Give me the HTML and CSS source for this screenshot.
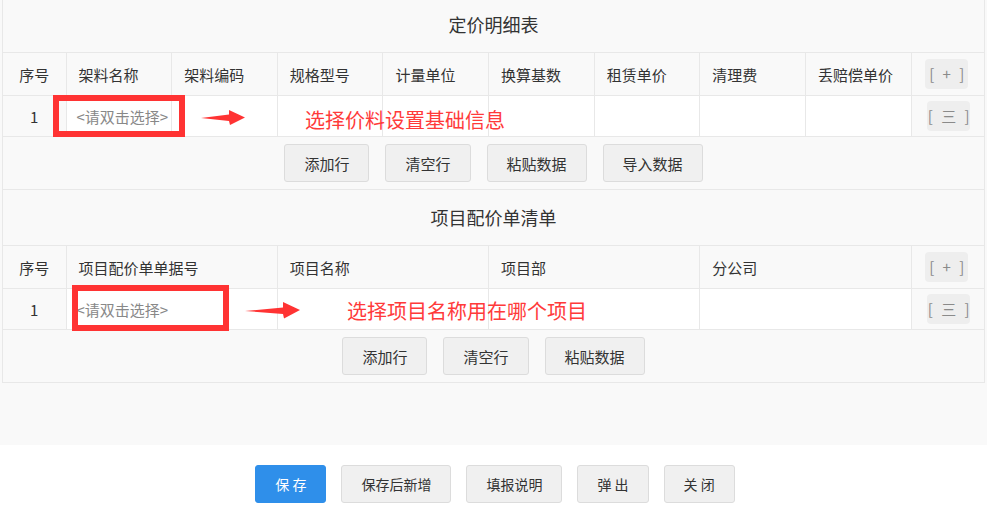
FILE: index.html
```html
<!DOCTYPE html>
<html lang="zh">
<head>
    <meta charset="UTF-8">
    <title>定价明细</title>
    <link rel="stylesheet" href="styles.css">
</head>
<body>
    <div class="main">
        <div class="section">
            <div class="sec-title first">定价明细表</div>
            <table class="grid">
                <colgroup>
                    <col class="c-no">
                    <col><col><col><col><col><col><col><col>
                    <col class="c-act">
                </colgroup>
                <tr class="head">
                    <th class="no">序号</th>
                    <th>架料名称</th>
                    <th>架料编码</th>
                    <th>规格型号</th>
                    <th>计量单位</th>
                    <th>换算基数</th>
                    <th>租赁单价</th>
                    <th>清理费</th>
                    <th>丢赔偿单价</th>
                    <th class="act"><span class="mini">[ + ]</span></th>
                </tr>
                <tr class="row">
                    <td class="no">1</td>
                    <td class="pick-cell"><div class="pick">&lt;请双击选择&gt;</div></td>
                    <td></td><td></td><td></td><td></td><td></td><td></td><td></td>
                    <td class="act"><span class="mini menu">[ 三 ]</span></td>
                </tr>
            </table>
            <div class="tools">
                <button class="btn">添加行</button>
                <button class="btn">清空行</button>
                <button class="btn">粘贴数据</button>
                <button class="btn">导入数据</button>
            </div>

            <div class="mark box1"></div>
            <svg class="mark arrow1" width="44" height="16" viewBox="0 0 44 16">
                <polygon points="0,8 28,4.5 28,0 44,7.5 29,15 28,11" fill="#ff3333"/>
            </svg>
            <div class="mark note note1">选择价料设置基础信息</div>
        </div>

        <div class="section">
            <div class="sec-title">项目配价单清单</div>
            <table class="grid">
                <colgroup>
                    <col class="c-no">
                    <col><col><col><col>
                    <col class="c-act">
                </colgroup>
                <tr class="head">
                    <th class="no">序号</th>
                    <th>项目配价单单据号</th>
                    <th>项目名称</th>
                    <th>项目部</th>
                    <th>分公司</th>
                    <th class="act"><span class="mini">[ + ]</span></th>
                </tr>
                <tr class="row">
                    <td class="no">1</td>
                    <td class="pick-cell"><div class="pick">&lt;请双击选择&gt;</div></td>
                    <td></td><td></td><td></td>
                    <td class="act"><span class="mini menu">[ 三 ]</span></td>
                </tr>
            </table>
            <div class="tools">
                <button class="btn">添加行</button>
                <button class="btn">清空行</button>
                <button class="btn">粘贴数据</button>
            </div>

            <div class="mark box2"></div>
            <svg class="mark arrow2" width="55" height="17" viewBox="0 0 55 17">
                <polygon points="0,9 38,5.5 38,0 55,8 39,16.5 38,12" fill="#ff3333"/>
            </svg>
            <div class="mark note note2">选择项目名称用在哪个项目</div>
        </div>
    </div>

    <div class="footer">
        <button class="btn big primary">保 存</button>
        <button class="btn big">保存后新增</button>
        <button class="btn big">填报说明</button>
        <button class="btn big">弹 出</button>
        <button class="btn big">关 闭</button>
    </div>
</body>
</html>
```

FILE: styles.css
```css
body {
    margin: 0;
    background: #fff;
    color: #333;
    font-family: "Noto Sans CJK SC", "Microsoft YaHei", sans-serif;
    font-size: 15px;
}
.main {
    height: 445px;
    background: #f9f9f9;
    overflow: hidden;
}
.section {
    position: relative;
    margin: 0 2px;
    border: 1px solid #e8e8e8;
    border-top: none;
}
.sec-title {
    height: 55px;
    line-height: 55px;
    text-align: center;
    font-size: 18px;
    color: #333;
}
.sec-title.first {
    height: 52px;
    line-height: 49px;
}
.grid {
    width: 100%;
    table-layout: fixed;
    border-collapse: collapse;
}
.grid col.c-no {
    width: 63px;
}
.grid col.c-act {
    width: 73px;
}
.grid th,
.grid td {
    border: 1px solid #e8e8e8;
    padding: 0 0 0 12px;
    text-align: left;
    font-weight: normal;
    white-space: nowrap;
    overflow: hidden;
}
.grid tr > :first-child {
    border-left: none;
}
.grid tr > :last-child {
    border-right: none;
}
.grid .head {
    height: 43px;
    background: #f9f9f9;
}
.grid .row {
    height: 41px;
    background: #fff;
}
.grid .no {
    text-align: center;
    padding: 0;
    background: #f9f9f9;
}
.grid .act {
    text-align: center;
    padding: 0;
    background: #f9f9f9;
}
.grid .pick-cell {
    padding: 0;
}
.pick {
    padding: 0 8px 0 10px;
    color: #888;
    overflow: hidden;
    white-space: nowrap;
}
.mini {
    display: inline-block;
    width: 43px;
    height: 30px;
    line-height: 30px;
    background: #eee;
    border-radius: 4px;
    color: #8a8a8a;
    font-size: 15px;
    word-spacing: 5px;
    text-align: center;
    margin-left: -2px;
}
.mini.menu {
    margin-left: 2px;
}
.tools {
    display: flex;
    justify-content: center;
    gap: 16px;
    height: 52px;
    padding-top: 7px;
    box-sizing: border-box;
}
.btn {
    height: 38px;
    padding: 0 19px;
    border: 1px solid #dcdcdc;
    border-radius: 3px;
    background: #f0f0f0;
    color: #333;
    font-family: inherit;
    font-size: 15px;
}
.footer {
    display: flex;
    justify-content: center;
    gap: 15px;
    padding-top: 20px;
    padding-left: 3px;
}
.btn.big {
    font-size: 14px;
    padding: 0 19px;
}
.btn.primary {
    background: #2f8fea;
    border-color: #2f8fea;
    color: #fff;
}
.mark {
    position: absolute;
}
.box1 {
    left: 50px;
    top: 95px;
    width: 132px;
    height: 42px;
    border: 6px solid #ff3333;
    box-sizing: border-box;
}
.box2 {
    left: 69px;
    top: 95px;
    width: 157px;
    height: 46px;
    border: 6px solid #ff3333;
    box-sizing: border-box;
}
.arrow1 {
    left: 198px;
    top: 110px;
}
.arrow2 {
    left: 242px;
    top: 112px;
}
.note {
    color: #ff3a3a;
    font-size: 20px;
    line-height: 24px;
    white-space: nowrap;
}
.note1 {
    left: 302px;
    top: 108px;
}
.note2 {
    left: 344px;
    top: 109px;
}
```
